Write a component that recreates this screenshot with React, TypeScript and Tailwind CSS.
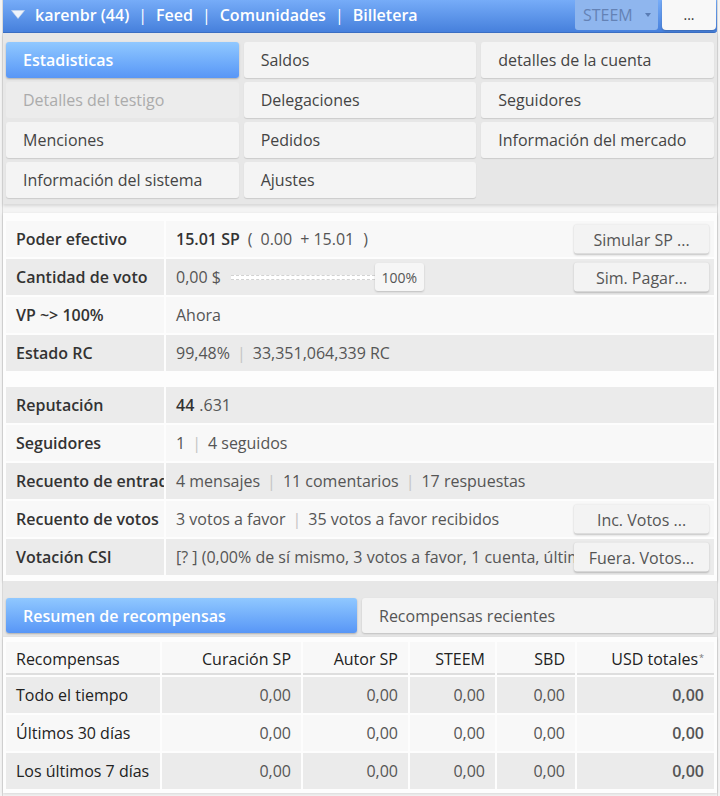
import React from "react";

const navButtons: { label: string; state?: "active" | "disabled" }[] = [
  { label: "Estadisticas", state: "active" },
  { label: "Saldos" },
  { label: "detalles de la cuenta" },
  { label: "Detalles del testigo", state: "disabled" },
  { label: "Delegaciones" },
  { label: "Seguidores" },
  { label: "Menciones" },
  { label: "Pedidos" },
  { label: "Información del mercado" },
  { label: "Información del sistema" },
  { label: "Ajustes" },
];

function Sep() {
  return <span className="mx-[7px] text-[#c4c4c4]">|</span>;
}

function SmallButton({ children }: { children: React.ReactNode }) {
  return (
    <div className="absolute right-[5px] top-1/2 -translate-y-1/2 flex h-[29px] w-[135px] items-center justify-center rounded-[3px] bg-[#f3f3f3] text-[#555] shadow-[0_1px_2px_rgba(0,0,0,0.22)]">
      {children}
    </div>
  );
}

function StatRow({
  label,
  dark,
  children,
  action,
}: {
  label: string;
  dark?: boolean;
  children: React.ReactNode;
  action?: string;
}) {
  const bg = dark ? "bg-[#ebebeb]" : "bg-[#f8f8f8]";
  return (
    <div className="flex h-[36px] gap-[2px]">
      <div
        className={`${bg} flex w-[158px] shrink-0 items-center overflow-hidden whitespace-nowrap pl-[10px] font-semibold text-[#333]`}
      >
        {label}
      </div>
      <div
        className={`${bg} relative flex flex-1 items-center overflow-hidden whitespace-nowrap pl-[10px] text-[#555]`}
      >
        {children}
        {action && <SmallButton>{action}</SmallButton>}
      </div>
    </div>
  );
}

const rewardCols = [
  { w: "w-[154px]", align: "text-left" },
  { w: "w-[139px]", align: "text-right" },
  { w: "w-[105px]", align: "text-right" },
  { w: "w-[85px]", align: "text-right" },
  { w: "w-[78px]", align: "text-right" },
  { w: "w-[136px]", align: "text-right" },
];

const rewardRows = [
  { label: "Todo el tiempo", dark: true },
  { label: "Últimos 30 días", dark: false },
  { label: "Los últimos 7 días", dark: true },
];

export default function App() {
  return (
    <div className="h-[796px] w-[720px] overflow-hidden bg-[#f4f4f4] font-['Open_Sans',sans-serif] text-[16px]">
      <div className="ml-[2px] h-full w-[716px] border-l border-r border-[#d9d9d9]">
        {/* top bar */}
        <div className="flex h-[33px] items-start rounded-br-[3px] border-b border-[#3b6fc4] bg-gradient-to-b from-[#76acf8] to-[#4680dc]">
          <div className="flex h-[29px] items-center font-semibold text-white">
            <svg width="14" height="9" viewBox="0 0 14 9" className="ml-[8px] mr-[10px]">
              <polygon points="0.5,0.5 13.5,0.5 7,8.5" fill="#eef3fb" stroke="#c9d6ea" strokeWidth="0.6" />
            </svg>
            <span>karenbr (44)</span>
            <span className="mx-[9px] font-normal">|</span>
            <span>Feed</span>
            <span className="mx-[9px] font-normal">|</span>
            <span>Comunidades</span>
            <span className="mx-[9px] font-normal">|</span>
            <span>Billetera</span>
          </div>
          <div className="ml-auto flex h-[30px] w-[83px] items-center rounded-b-[3px] bg-[#8fb6ee] pl-[8px] text-[#6482b5]">
            <span>STEEM</span>
            <svg width="6" height="5" viewBox="0 0 6 5" className="ml-[12px]">
              <polygon points="0,0 6,0 3,4" fill="#5a7db5" />
            </svg>
          </div>
          <div className="ml-[4px] mr-[1px] flex h-[30px] w-[54px] items-center justify-center rounded-b-[4px] bg-[#f8f8f8] pb-[2px] text-[14px] text-[#333] shadow-[0_1px_2px_rgba(0,0,0,0.2)]">
            ...
          </div>
        </div>

        {/* section menu */}
        <div className="bg-[#e7e7e7] px-[3px] pb-[6px] pt-[9px] shadow-[0_2px_3px_rgba(0,0,0,0.12)]">
          <div className="grid grid-cols-3 gap-x-[5px] gap-y-[4px]">
            {navButtons.map((b) => {
              const cls =
                b.state === "active"
                  ? "bg-gradient-to-b from-[#90c8ff] to-[#5896f6] font-semibold text-white shadow-[0_1px_2px_rgba(0,0,0,0.25)]"
                  : b.state === "disabled"
                  ? "bg-[#ececec] text-[#ababab]"
                  : "bg-[#f4f4f4] text-[#444] shadow-[0_1px_1px_rgba(0,0,0,0.12)]";
              return (
                <div
                  key={b.label}
                  className={`flex h-[36px] items-center rounded-[3px] pl-[17px] ${cls}`}
                >
                  {b.label}
                </div>
              );
            })}
          </div>
        </div>

        {/* account stats */}
        <div className="mt-[9px] bg-[#fdfdfd] px-[3px] pb-[6px] pt-[8px] shadow-[0_1px_3px_rgba(0,0,0,0.12)]">
          <div className="flex flex-col gap-[2px]">
            <StatRow label="Poder efectivo" action="Simular SP ...">
              <span className="font-semibold text-[#333]">15.01 SP</span>
              <span className="ml-[8px]">(</span>
              <span className="ml-[8px]">0.00</span>
              <span className="ml-[8px]">+ 15.01</span>
              <span className="ml-[9px]">)</span>
            </StatRow>
            <StatRow label="Cantidad de voto" dark action="Sim. Pagar...">
              <span>0,00 $</span>
              <div className="ml-[10px] h-[5px] w-[144px] border-y border-dashed border-[#d2d2d2] bg-white" />
              <div className="flex h-[28px] w-[49px] items-center justify-center rounded-[3px] bg-[#f6f6f6] text-[14px] text-[#555] shadow-[0_1px_2px_rgba(0,0,0,0.2)]">
                100%
              </div>
            </StatRow>
            <StatRow label="VP ~> 100%">Ahora</StatRow>
            <StatRow label="Estado RC" dark>
              99,48%
              <Sep />
              33,351,064,339 RC
            </StatRow>
          </div>

          <div className="mt-[16px] flex flex-col gap-[2px]">
            <StatRow label="Reputación" dark>
              <span className="font-semibold text-[#333]">44</span>
              <span className="ml-[5px]">.631</span>
            </StatRow>
            <StatRow label="Seguidores">
              1<Sep />4 seguidos
            </StatRow>
            <StatRow label="Recuento de entradas" dark>
              4 mensajes
              <Sep />
              11 comentarios
              <Sep />
              17 respuestas
            </StatRow>
            <StatRow label="Recuento de votos" action="Inc. Votos ...">
              3 votos a favor
              <Sep />
              35 votos a favor recibidos
            </StatRow>
            <StatRow label="Votación CSI" dark action="Fuera. Votos...">
              [? ] (0,00% de sí mismo, 3 votos a favor, 1 cuenta, últimos 7 días)
            </StatRow>
          </div>
        </div>

        {/* reward tabs */}
        <div className="bg-[#e7e7e7] px-[3px] pb-[4px] pt-[17px]">
          <div className="flex gap-[5px]">
            <div className="flex h-[35px] w-[351px] items-center rounded-[3px] bg-gradient-to-b from-[#90c8ff] to-[#5896f6] pl-[17px] font-semibold text-white shadow-[0_1px_2px_rgba(0,0,0,0.25)]">
              Resumen de recompensas
            </div>
            <div className="flex h-[35px] flex-1 items-center rounded-[3px] bg-[#f4f4f4] pl-[17px] text-[#555] shadow-[0_1px_2px_rgba(0,0,0,0.18)]">
              Recompensas recientes
            </div>
          </div>
        </div>

        {/* reward summary table */}
        <div className="bg-[#fdfdfd] px-[3px] pb-[4px] pt-[5px] shadow-[0_1px_3px_rgba(0,0,0,0.12)]">
          <div className="flex flex-col gap-[2px]">
            <div className="flex h-[33px] gap-[2px]">
              {["Recompensas", "Curación SP", "Autor SP", "STEEM", "SBD", "USD totales"].map((h, i) => (
                <div
                  key={h}
                  className={`${rewardCols[i].w} ${rewardCols[i].align} ${
                    i === 0 ? "pl-[10px]" : "pr-[10px]"
                  } ${i === 5 ? "flex-1 pr-[8px]" : ""} border-b-2 border-[#dedede] bg-[#f8f8f8] pt-[5px] text-[#222]`}
                >
                  {h}
                  {i === 5 && <sup className="ml-[1px] text-[9px] text-[#777]">*</sup>}
                </div>
              ))}
            </div>
            {rewardRows.map((r) => (
              <div key={r.label} className="flex h-[36px] gap-[2px]">
                {rewardCols.map((c, i) => (
                  <div
                    key={i}
                    className={`${c.w} ${c.align} ${i === 0 ? "pl-[10px] text-[#222]" : "pr-[10px] text-[#555]"} ${
                      i === 5 ? "flex-1 font-semibold text-[#333]" : ""
                    } ${r.dark ? "bg-[#ebebeb]" : "bg-[#f8f8f8]"} flex items-center ${
                      i === 0 ? "justify-start" : "justify-end"
                    }`}
                  >
                    {i === 0 ? r.label : "0,00"}
                  </div>
                ))}
              </div>
            ))}
          </div>
        </div>
      </div>
    </div>
  );
}
